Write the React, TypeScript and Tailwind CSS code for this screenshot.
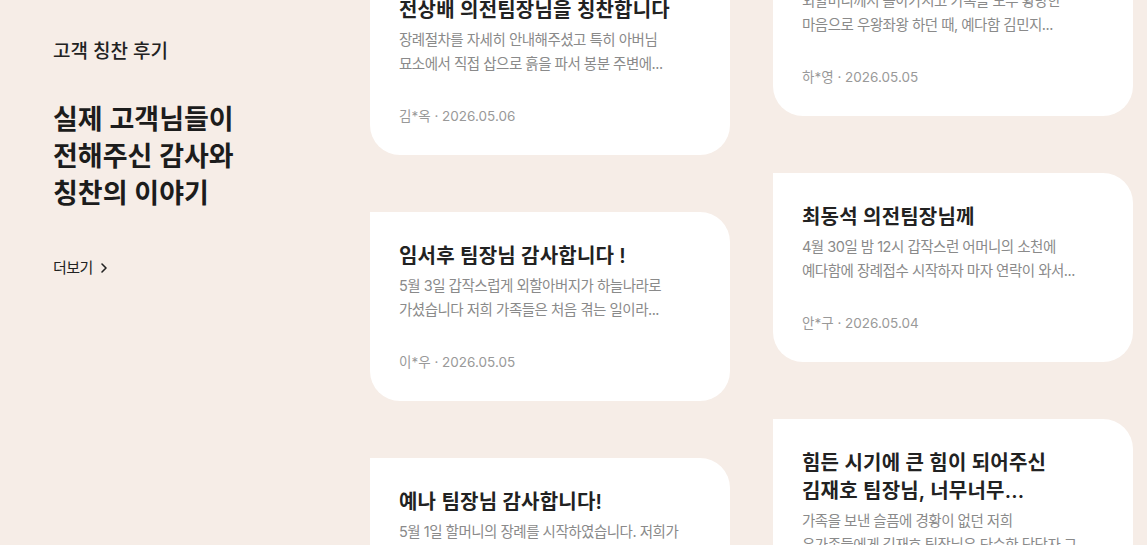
import React from "react";

type Review = {
  title: string[];
  body: string[];
  meta: string;
};

const col1: Review[] = [
  {
    title: ["전상배 의전팀장님을 칭찬합니다"],
    body: ["장례절차를 자세히 안내해주셨고 특히 아버님", "묘소에서 직접 삽으로 흙을 파서 봉분 주변에..."],
    meta: "김*옥 · 2026.05.06",
  },
  {
    title: ["임서후 팀장님 감사합니다 !"],
    body: ["5월 3일 갑작스럽게 외할아버지가 하늘나라로", "가셨습니다 저희 가족들은 처음 겪는 일이라..."],
    meta: "이*우 · 2026.05.05",
  },
  {
    title: ["예나 팀장님 감사합니다!"],
    body: ["5월 1일 할머니의 장례를 시작하였습니다. 저희가", "처음이라 아무것도 모르는 상황에서 팀장님께서..."],
    meta: "박*진 · 2026.05.03",
  },
];

const col2: Review[] = [
  {
    title: ["김민지 팀장님 감사드립니다"],
    body: ["외할머니께서 돌아가시고 가족들 모두 황망한", "마음으로 우왕좌왕 하던 때, 예다함 김민지..."],
    meta: "하*영 · 2026.05.05",
  },
  {
    title: ["최동석 의전팀장님께"],
    body: ["4월 30일 밤 12시 갑작스런 어머니의 소천에", "예다함에 장례접수 시작하자 마자 연락이 와서..."],
    meta: "안*구 · 2026.05.04",
  },
  {
    title: ["힘든 시기에 큰 힘이 되어주신", "김재호 팀장님, 너무너무..."],
    body: ["가족을 보낸 슬픔에 경황이 없던 저희", "유가족들에게 김재호 팀장님은 단순한 담당자 그..."],
    meta: "최*희 · 2026.05.02",
  },
];

const font = "font-['Inter','Noto_Sans_CJK_KR',sans-serif]";

function Card({ r }: { r: Review }) {
  return (
    <div className="w-[360px] shrink-0 bg-white rounded-[30px] rounded-tl-none pt-[30px] pb-[29px] px-[29px]">
      <div className="text-[20px] leading-[28px] font-semibold text-[#222222] tracking-[0.2px] whitespace-nowrap">
        {r.title.map((t, i) => (
          <div key={i}>{t}</div>
        ))}
      </div>
      <div className="mt-[4px] text-[14.5px] leading-[24px] text-[#8a8a8a] tracking-[-0.5px] whitespace-nowrap">
        {r.body.map((t, i) => (
          <div key={i}>{t}</div>
        ))}
      </div>
      <div className="mt-[30px] text-[13.5px] leading-[20px] text-[#999999] whitespace-nowrap">{r.meta}</div>
    </div>
  );
}

export default function App() {
  return (
    <div className={`h-[545px] w-full overflow-hidden bg-[#f6ede7] flex ${font}`}>
      <aside className="w-[370px] shrink-0 pl-[53px] pt-[39px]">
        <div className="text-[19px] leading-[26px] font-medium text-[#222222]">고객 칭찬 후기</div>
        <h2 className="mt-[36px] text-[27px] leading-[37px] font-semibold text-[#1c1c1c]">
          <div>실제 고객님들이</div>
          <div>전해주신 감사와</div>
          <div>칭찬의 이야기</div>
        </h2>
        <a className="mt-[45px] flex items-center gap-[6px] text-[15px] leading-[22px] text-[#222222] tracking-[-0.5px]">
          <span>더보기</span>
          <svg width="10" height="12" viewBox="0 0 10 12" fill="none">
            <path d="M3 2 L7 6 L3 10" stroke="#222" strokeWidth="1.6" strokeLinecap="round" strokeLinejoin="round" />
          </svg>
        </a>
      </aside>
      <div className="flex gap-[43px]">
        <div className="flex flex-col gap-[57px] mt-[-34px]">
          {col1.map((r, i) => (
            <Card key={i} r={r} />
          ))}
        </div>
        <div className="flex flex-col gap-[57px] mt-[-73px]">
          {col2.map((r, i) => (
            <Card key={i} r={r} />
          ))}
        </div>
      </div>
    </div>
  );
}
